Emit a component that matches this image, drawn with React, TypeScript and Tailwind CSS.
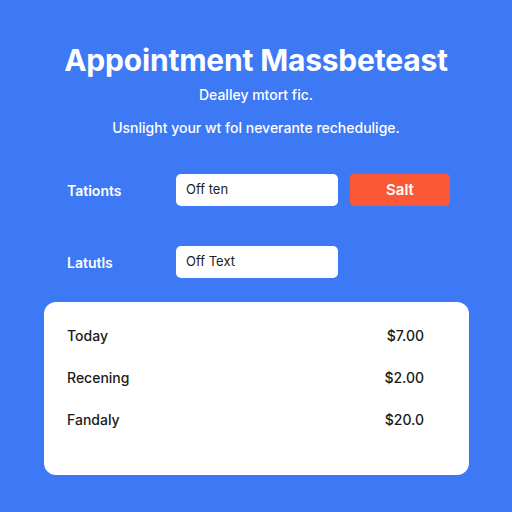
export default function App() {
  const rows = [
    { name: "Today", amount: "$7.00" },
    { name: "Recening", amount: "$2.00" },
    { name: "Fandaly", amount: "$20.0" },
  ];
  return (
    <div
      className="w-[512px] h-[512px] bg-[#3d79f4] flex flex-col"
      style={{ fontFamily: "Inter, 'Noto Sans', sans-serif" }}
    >
      <h1 className="mt-[42px] text-center text-white font-bold text-[30px] leading-[36px] tracking-[-0.2px]">
        Appointment Massbeteast
      </h1>
      <p className="mt-[7px] text-center text-white font-medium text-[14px] leading-[20px]">
        Dealley mtort fic.
      </p>
      <p className="mt-[13px] text-center text-white font-medium text-[14px] leading-[20px]">
        Usnlight your wt fol neverante rechedulige.
      </p>

      <div className="mt-[36px] flex items-center pl-[67px]">
        <span className="w-[109px] text-white font-semibold text-[14px]">Tationts</span>
        <div className="w-[162px] h-[32px] bg-white rounded-[5px] flex items-center px-[10px] text-[13px] text-[#222]">
          Off ten
        </div>
        <button className="ml-[12px] w-[100px] h-[32px] bg-[#fb5836] rounded-[4px] text-white font-semibold text-[15px]">
          Salt
        </button>
      </div>

      <div className="mt-[40px] flex items-center pl-[67px]">
        <span className="w-[109px] text-white font-semibold text-[14px]">Latutls</span>
        <div className="w-[162px] h-[32px] bg-white rounded-[5px] flex items-center px-[10px] text-[13px] text-[#222]">
          Off Text
        </div>
      </div>

      <div className="mt-[24px] ml-[44px] w-[425px] h-[173px] bg-white rounded-[12px] pl-[23px] pr-[45px] pt-[23px] flex flex-col gap-[22px]">
        {rows.map((r) => (
          <div key={r.name} className="flex justify-between items-center h-[20px] text-[14px] font-medium text-[#1a1a1a]">
            <span>{r.name}</span>
            <span>{r.amount}</span>
          </div>
        ))}
      </div>
    </div>
  );
}
